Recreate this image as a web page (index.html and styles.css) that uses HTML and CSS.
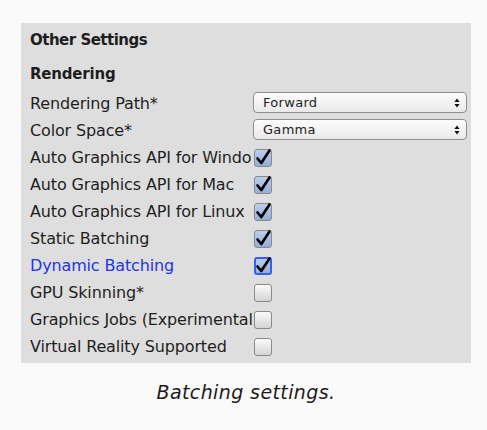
FILE: index.html
```html
<!DOCTYPE html>
<html>
<head>
<meta charset="utf-8">
<link rel="stylesheet" href="styles.css">
</head>
<body>
<div class="page">
  <div class="panel">
    <div class="title">Other Settings</div>
    <div class="section">Rendering</div>
    <div class="row">
      <div class="label">Rendering Path*</div>
      <div class="select"><span>Forward</span><span class="arrows"><svg width="6" height="10" viewBox="0 0 6 10"><path d="M3 0.5 L5.6 4 L0.4 4 Z M3 9.5 L5.6 6 L0.4 6 Z" fill="#111"/></svg></span></div>
    </div>
    <div class="row">
      <div class="label">Color Space*</div>
      <div class="select"><span>Gamma</span><span class="arrows"><svg width="6" height="10" viewBox="0 0 6 10"><path d="M3 0.5 L5.6 4 L0.4 4 Z M3 9.5 L5.6 6 L0.4 6 Z" fill="#111"/></svg></span></div>
    </div>
    <div class="row">
      <div class="label">Auto Graphics API for Windows</div>
      <div class="check on"><svg width="18" height="18" viewBox="0 0 18 18"><path d="M3.5 9.5 L7.3 14 L15.5 1.5" fill="none" stroke="#000" stroke-width="2.7" stroke-linecap="round" stroke-linejoin="round"/></svg></div>
    </div>
    <div class="row">
      <div class="label">Auto Graphics API for Mac</div>
      <div class="check on"><svg width="18" height="18" viewBox="0 0 18 18"><path d="M3.5 9.5 L7.3 14 L15.5 1.5" fill="none" stroke="#000" stroke-width="2.7" stroke-linecap="round" stroke-linejoin="round"/></svg></div>
    </div>
    <div class="row">
      <div class="label">Auto Graphics API for Linux</div>
      <div class="check on"><svg width="18" height="18" viewBox="0 0 18 18"><path d="M3.5 9.5 L7.3 14 L15.5 1.5" fill="none" stroke="#000" stroke-width="2.7" stroke-linecap="round" stroke-linejoin="round"/></svg></div>
    </div>
    <div class="row">
      <div class="label">Static Batching</div>
      <div class="check on"><svg width="18" height="18" viewBox="0 0 18 18"><path d="M3.5 9.5 L7.3 14 L15.5 1.5" fill="none" stroke="#000" stroke-width="2.7" stroke-linecap="round" stroke-linejoin="round"/></svg></div>
    </div>
    <div class="row">
      <div class="label blue">Dynamic Batching</div>
      <div class="check on focus"><svg width="18" height="18" viewBox="0 0 18 18"><path d="M3.5 9.5 L7.3 14 L15.5 1.5" fill="none" stroke="#000" stroke-width="2.7" stroke-linecap="round" stroke-linejoin="round"/></svg></div>
    </div>
    <div class="row">
      <div class="label">GPU Skinning*</div>
      <div class="check"></div>
    </div>
    <div class="row">
      <div class="label">Graphics Jobs (Experimental)</div>
      <div class="check"></div>
    </div>
    <div class="row">
      <div class="label">Virtual Reality Supported</div>
      <div class="check"></div>
    </div>
  </div>
  <div class="caption">Batching settings.</div>
</div>
</body>
</html>
```

FILE: styles.css
```css
html, body {
  margin: 0;
  padding: 0;
  background: #fafafa;
}
.page {
  padding: 23px 16px 0 21px;
  font-family: "DejaVu Sans", sans-serif;
  color: #1e1e1e;
}
.panel {
  width: 450px;
  height: 340px;
  box-sizing: border-box;
  background: #dedede;
  padding: 0 0 0 9px;
}
.title {
  font-weight: bold;
  font-size: 15px;
  height: 32px;
  line-height: 32px;
  padding-top: 1px;
  box-sizing: border-box;
  letter-spacing: -0.5px;
}
.section {
  font-weight: bold;
  font-size: 15px;
  height: 34px;
  line-height: 38px;
  letter-spacing: -0.2px;
}
.row {
  height: 27px;
  display: flex;
  align-items: center;
}
.label {
  width: 222px;
  flex: none;
  font-size: 16px;
  letter-spacing: -0.15px;
  white-space: nowrap;
  overflow: hidden;
  padding-top: 1px;
}
.label.blue {
  color: #2235e8;
}
.select {
  width: 214px;
  height: 21px;
  box-sizing: border-box;
  border: 1px solid #8e8e8e;
  border-radius: 4px;
  background: linear-gradient(#fdfdfd, #e9e9e9);
  display: flex;
  align-items: center;
  justify-content: space-between;
  padding: 0 6px 0 9px;
  font-size: 13px;
  letter-spacing: 0.3px;
  margin-left: 1px;
}
.arrows {
  display: flex;
  align-items: center;
}
.check {
  width: 18px;
  height: 18px;
  box-sizing: border-box;
  border: 1px solid #8a8a8a;
  border-radius: 3px;
  background: linear-gradient(#fbfbfb, #d4d4d4);
  margin-left: 2px;
  margin-top: 2px;
}
.check.on {
  background: linear-gradient(#bccfec, #93aed8);
}
.check.focus {
  border: 2px solid #3a5cf2;
}
.check svg {
  display: block;
  overflow: visible;
  margin: -1px;
}
.check.focus svg {
  margin: -2px;
}
.caption {
  text-align: center;
  width: 450px;
  font-style: italic;
  font-size: 19px;
  letter-spacing: 0.4px;
  margin-top: 18px;
  color: #1a1a1a;
}
```
